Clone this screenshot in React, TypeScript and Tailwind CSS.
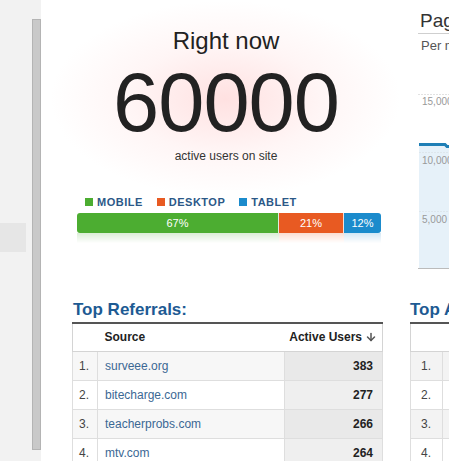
import React from 'react';
import { ArrowDown } from 'lucide-react';

interface Referral {
  rank: number;
  source: string;
  users: number;
}

const referrals: Referral[] = [
  { rank: 1, source: 'surveee.org', users: 383 },
  { rank: 2, source: 'bitecharge.com', users: 277 },
  { rank: 3, source: 'teacherprobs.com', users: 266 },
  { rank: 4, source: 'mtv.com', users: 264 },
];

const devices = [
  { label: 'MOBILE', color: 'bg-[#4cad31]' },
  { label: 'DESKTOP', color: 'bg-[#e85a22]' },
  { label: 'TABLET', color: 'bg-[#1b8bcc]' },
];

const Sidebar: React.FC = () => (
  <div className="flex w-[41px] shrink-0 items-start bg-[#f2f2f2]">
    <div className="mt-[223px] h-[29px] w-[26px] bg-[#e6e6e6]" />
    <div className="ml-[6px] mt-[19px] h-[431px] w-[9px] border border-[#b4b4b4] bg-[#c9c9c9]" />
  </div>
);

const Hero: React.FC = () => (
  <div className="flex h-[190px] shrink-0 flex-col items-center bg-[radial-gradient(ellipse_175px_98px_at_50%_52%,rgba(255,205,205,0.6)_0%,rgba(255,225,225,0.32)_55%,rgba(255,255,255,0)_100%)] pl-[1px] pt-[27px] text-[#222]">
    <div className="text-[24px] leading-[28px]">Right now</div>
    <div className="mt-[6px] text-[83px] leading-[83px] tracking-[-1px]">60000</div>
    <div className="mt-[5px] text-[12px] leading-[14px] text-[#333]">active users on site</div>
  </div>
);

const DeviceBar: React.FC = () => (
  <div className="flex shrink-0 flex-col">
    <div className="ml-[44px] mt-[5px] flex items-center text-[11px] font-bold leading-[14px] tracking-[0.5px] text-[#2b5887]">
      {devices.map((d) => (
        <div key={d.label} className="mr-[14px] flex items-center">
          <span className={`mr-[4px] h-[8px] w-[8px] ${d.color}`} />
          {d.label}
        </div>
      ))}
    </div>
    <div className="ml-[36px] mt-[4px] flex h-[20px] w-[304px] overflow-hidden rounded-[3px] text-[11px] leading-[20px] text-white">
      <div className="w-[202px] border-r border-[#dfeedd] bg-[#4cad31] text-center">67%</div>
      <div className="w-[65px] border-r border-[#f6e0d6] bg-[#e85a22] text-center">21%</div>
      <div className="flex-1 bg-[#1b8bcc] text-center">12%</div>
    </div>
    <div className="ml-[36px] flex h-[10px] w-[304px] opacity-20">
      <div className="w-[202px] bg-gradient-to-b from-[#4cad31] to-white" />
      <div className="w-[65px] bg-gradient-to-b from-[#e85a22] to-white" />
      <div className="flex-1 bg-gradient-to-b from-[#1b8bcc] to-white" />
    </div>
  </div>
);

const ReferralTable: React.FC = () => (
  <div className="mt-[57px] w-[311px]">
    <h2 className="pl-[1px] text-[17px] font-bold leading-[20px] text-[#1d5a93]">Top Referrals:</h2>
    <table className="mt-[2px] w-full border-collapse text-[12px]">
      <thead>
        <tr className="h-[28px] border-t-2 border-[#555]">
          <th className="w-[25px] border-b border-l border-[#d4d4d4] bg-white" />
          <th className="border-b border-[#d4d4d4] bg-white pl-[7px] text-left font-bold text-[#222]">Source</th>
          <th className="w-[98px] border-b border-r border-[#d4d4d4] bg-white pr-[5px] text-right font-bold text-[#222]">
            <span className="inline-flex items-center">
              Active Users
              <ArrowDown className="ml-[3px] h-[12px] w-[12px] text-[#555]" strokeWidth={3} />
            </span>
          </th>
        </tr>
      </thead>
      <tbody>
        {referrals.map((r) => (
          <tr key={r.rank} className={`h-[29px] ${r.rank % 2 === 1 ? 'bg-[#f7f7f7]' : 'bg-white'}`}>
            <td className="border border-[#dedede] pl-[6px] text-[#444]">{r.rank}.</td>
            <td className="border border-[#dedede] pl-[7px] text-[#3b6894]">{r.source}</td>
            <td className={`border border-[#dedede] pr-[9px] text-right font-bold text-[#222] ${r.rank % 2 === 1 ? 'bg-[#e9e9e9]' : 'bg-[#efefef]'}`}>
              {r.users}
            </td>
          </tr>
        ))}
      </tbody>
    </table>
  </div>
);

const PageviewsChart: React.FC = () => (
  <div className="ml-[8px] flex shrink-0 flex-col">
    <div className="border-b border-[#cfcfcf] pb-[3px] pl-[2px] pt-[11px] text-[19px] leading-[19px] text-[#333]">Pageviews</div>
    <div className="pl-[3px] pt-[4px] text-[13px] leading-[15px] text-[#555]">Per minute</div>
    <svg width="300" height="181" className="mt-[36px] block">
      <line x1="0" y1="5.5" x2="300" y2="5.5" stroke="#e2e2e2" strokeDasharray="2 1" />
      <text x="4" y="16" fontSize="10" fill="#999" fontFamily="Liberation Sans, Arial, sans-serif">15,000</text>
      <polygon points="1,57 300,57 300,179 1,179" fill="#e6f1f9" />
      <line x1="1" y1="63.5" x2="300" y2="63.5" stroke="#dde6ec" strokeDasharray="2 1" />
      <text x="4" y="75" fontSize="10" fill="#999" fontFamily="Liberation Sans, Arial, sans-serif">10,000</text>
      <line x1="1" y1="122.5" x2="300" y2="122.5" stroke="#dde6ec" strokeDasharray="2 1" />
      <text x="4" y="134" fontSize="10" fill="#999" fontFamily="Liberation Sans, Arial, sans-serif">5,000</text>
      <polyline points="1,55.5 27,55.5 29,57.5 300,57.5" fill="none" stroke="#1f7fb6" strokeWidth="3" />
      <line x1="0" y1="179.5" x2="300" y2="179.5" stroke="#bbb" />
    </svg>
  </div>
);

const ArticlesTable: React.FC = () => (
  <div className="mt-[30px] w-[300px] shrink-0">
    <h2 className="text-[17px] font-bold leading-[20px] text-[#1d5a93]">Top Articles:</h2>
    <table className="mt-[2px] w-full border-collapse text-[12px]">
      <thead>
        <tr className="h-[28px] border-t-2 border-[#555]">
          <th className="w-[32px] border-b border-l border-[#d4d4d4] bg-white" />
          <th className="border-b border-[#d4d4d4] bg-white pl-[7px] text-left font-bold text-[#222]">Article</th>
        </tr>
      </thead>
      <tbody>
        {[1, 2, 3, 4].map((n) => (
          <tr key={n} className={`h-[29px] ${n % 2 === 1 ? 'bg-[#f3f3f3]' : 'bg-white'}`}>
            <td className="border border-[#dedede] pl-[10px] text-[#444]">{n}.</td>
            <td className="border border-[#dedede]" />
          </tr>
        ))}
      </tbody>
    </table>
  </div>
);

export default function App() {
  return (
    <div className="flex h-[461px] w-[449px] overflow-hidden bg-white font-['Liberation_Sans',Arial,sans-serif]">
      <Sidebar />
      <div className="flex w-[369px] shrink-0 flex-col">
        <Hero />
        <DeviceBar />
        <div className="shrink-0 pl-[31px]">
          <ReferralTable />
        </div>
      </div>
      <div className="flex w-[300px] shrink-0 flex-col">
        <PageviewsChart />
        <ArticlesTable />
      </div>
    </div>
  );
}
